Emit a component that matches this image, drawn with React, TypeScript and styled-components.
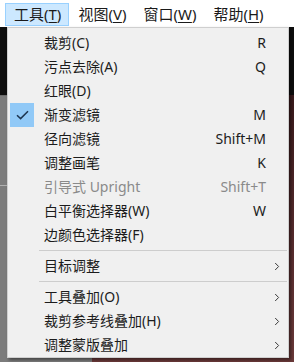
import styled, { createGlobalStyle } from 'styled-components';

const GlobalStyle = createGlobalStyle`
    html, body {
        margin: 0;
        padding: 0;
        width: 294px;
        height: 362px;
        overflow: hidden;
        font-family: "Noto Sans", "Noto Sans CJK SC", sans-serif;
    }
`;

const Screen = styled.div`
    position: relative;
    width: 294px;
    height: 362px;
    display: flex;
    flex-direction: column;
    background: #111;
`;

const MenuBar = styled.div`
    height: 27px;
    box-sizing: border-box;
    padding: 3px 0 0 5px;
    display: flex;
    align-items: flex-start;
    background: #fff;
`;

const BarItem = styled.div<{ $active?: boolean }>`
    height: 23px;
    box-sizing: border-box;
    padding: 0 7px 0 8px;
    line-height: 21px;
    font-size: 15px;
    color: #1a1a1a;
    border: 1px solid ${({ $active }) => ($active ? '#99d1ff' : 'transparent')};
    background: ${({ $active }) => ($active ? '#cce8ff' : 'transparent')};
    white-space: nowrap;

    u {
        text-decoration-thickness: 1px;
        text-underline-offset: 2px;
    }
`;

const DarkBand = styled.div`
    height: 68px;
    background: #0e0e0e;
`;

const Workspace = styled.div`
    flex: 1;
    display: flex;
`;

const SidePanel = styled.div`
    width: 92px;
    background: #7c7c7c;
    border-top: 1px solid #6a6a6a;

    &::after {
        content: '';
        display: block;
        margin-top: 89px;
        height: 1px;
        background: #b0b0b0;
    }
`;

const Photo = styled.div`
    flex: 1;
    background: linear-gradient(180deg, #3a1a1c 0%, #5a2e30 60%, #6b3a3a 100%);
`;

// dropdown lies over the workspace
const Dropdown = styled.div`
    position: absolute;
    left: 7px;
    top: 27px;
    width: 282px;
    height: 331px;
    box-sizing: border-box;
    padding: 3px 0 0;
    background: #f0f0f0;
    border: 1px solid #cfcfcf;
    box-shadow: 2px 2px 3px rgba(0, 0, 0, 0.45);
    font-size: 14px;
`;

const Row = styled.div<{ $disabled?: boolean }>`
    height: 24px;
    display: grid;
    grid-template-columns: 36px 1fr auto 22px;
    align-items: center;
    color: ${({ $disabled }) => ($disabled ? '#8a8a8a' : '#1c1c1c')};
    white-space: nowrap;
`;

const CheckBox = styled.div`
    margin-left: 2px;
    width: 24px;
    height: 24px;
    background: #91c9f7;
    display: flex;
    align-items: center;
    justify-content: center;
`;

const Label = styled.span`
    line-height: 24px;
`;

const Shortcut = styled.span`
    line-height: 24px;
    text-align: right;
`;

const Arrow = styled.span`
    display: flex;
    justify-content: center;
`;

const Separator = styled.div`
    height: 7px;
    display: flex;
    align-items: center;
    padding: 0 1px 0 31px;

    &::before {
        content: '';
        flex: 1;
        height: 1px;
        background: #cdcdcd;
    }
`;

type Item = {
    label: string;
    shortcut?: string;
    checked?: boolean;
    disabled?: boolean;
    submenu?: boolean;
} | 'sep';

const items: Item[] = [
    { label: '裁剪(C)', shortcut: 'R' },
    { label: '污点去除(A)', shortcut: 'Q' },
    { label: '红眼(D)' },
    { label: '渐变滤镜', shortcut: 'M', checked: true },
    { label: '径向滤镜', shortcut: 'Shift+M' },
    { label: '调整画笔', shortcut: 'K' },
    { label: '引导式 Upright', shortcut: 'Shift+T', disabled: true },
    { label: '白平衡选择器(W)', shortcut: 'W' },
    { label: '边颜色选择器(F)' },
    'sep',
    { label: '目标调整', submenu: true },
    'sep',
    { label: '工具叠加(O)', submenu: true },
    { label: '裁剪参考线叠加(H)', submenu: true },
    { label: '调整蒙版叠加', submenu: true },
];

const CheckIcon = () => (
    <svg width="13" height="10" viewBox="0 0 13 10">
        <path d="M1 5.2 L4.6 8.6 L12 1.2" fill="none" stroke="#1d3550" strokeWidth="1.5" />
    </svg>
);

const ChevronIcon = () => (
    <svg width="6" height="9" viewBox="0 0 6 9">
        <path d="M1.2 1 L4.6 4.5 L1.2 8" fill="none" stroke="#3a3a3a" strokeWidth="1" />
    </svg>
);

export default function App() {
    return (
        <>
            <GlobalStyle />
            <Screen>
                <MenuBar>
                    <BarItem $active>工具(<u>T</u>)</BarItem>
                    <BarItem>视图(<u>V</u>)</BarItem>
                    <BarItem>窗口(<u>W</u>)</BarItem>
                    <BarItem>帮助(<u>H</u>)</BarItem>
                </MenuBar>
                <DarkBand />
                <Workspace>
                    <SidePanel />
                    <Photo />
                </Workspace>

                <Dropdown>
                    {items.map((item, i) =>
                        item === 'sep' ? (
                            <Separator key={i} />
                        ) : (
                            <Row key={i} $disabled={item.disabled}>
                                <span>
                                    {item.checked && (
                                        <CheckBox>
                                            <CheckIcon />
                                        </CheckBox>
                                    )}
                                </span>
                                <Label>{item.label}</Label>
                                <Shortcut>{item.shortcut}</Shortcut>
                                <Arrow>{item.submenu && <ChevronIcon />}</Arrow>
                            </Row>
                        )
                    )}
                </Dropdown>
            </Screen>
        </>
    );
}
